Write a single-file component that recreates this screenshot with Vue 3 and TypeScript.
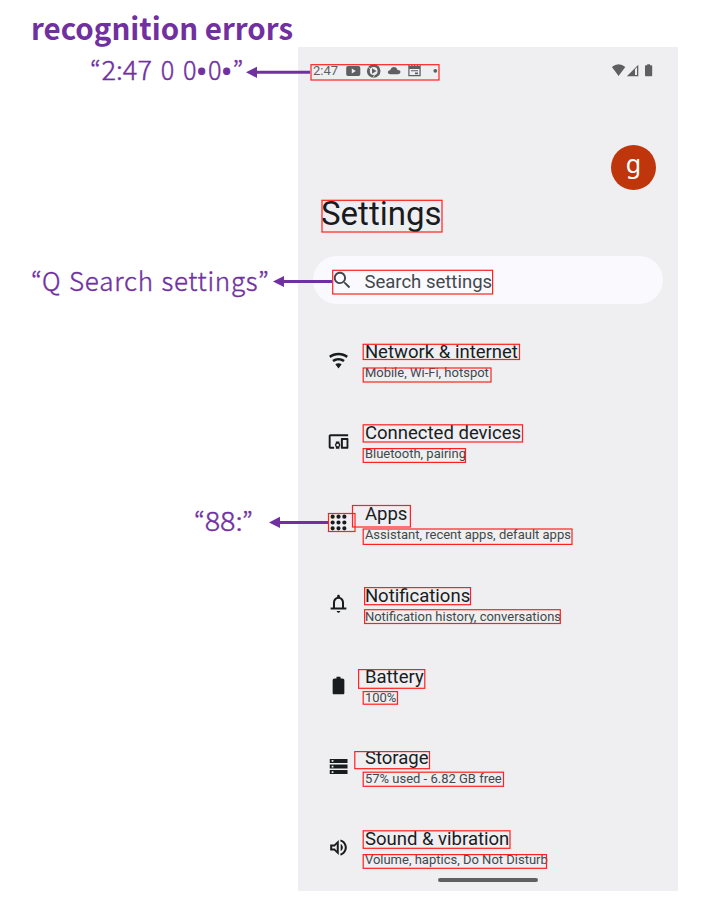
<script setup lang="ts">
interface Row { icon: string; title: string; sub: string }
interface Box { x: number; y: number; r: number; b: number }
interface Part { t: string; x: number; w?: number; dot?: boolean }
interface Note { parts: Part[]; y: number; tip: number; tail: number; line: number }

const rows: Row[] = [
  { icon: 'wifi', title: 'Network & internet', sub: 'Mobile, Wi-Fi, hotspot' },
  { icon: 'devices', title: 'Connected devices', sub: 'Bluetooth, pairing' },
  { icon: 'apps', title: 'Apps', sub: 'Assistant, recent apps, default apps' },
  { icon: 'bell', title: 'Notifications', sub: 'Notification history, conversations' },
  { icon: 'battery', title: 'Battery', sub: '100%' },
  { icon: 'storage', title: 'Storage', sub: '57% used - 6.82 GB free' },
  { icon: 'sound', title: 'Sound & vibration', sub: 'Volume, haptics, Do Not Disturb' },
]

const paths: Record<string, string> = {
  wifi: 'M12 21 15.6 16.2C14.6 15.45 13.35 15 12 15s-2.6.45-3.6 1.2L12 21zM12 3C7.95 3 4.21 4.34 1.2 6.6L3 9c2.5-1.88 5.62-3 9-3s6.5 1.12 9 3l1.8-2.4C19.79 4.34 16.05 3 12 3zm0 6c-2.7 0-5.19.89-7.2 2.4l1.8 2.4C8.1 12.67 9.97 12 12 12s3.9.67 5.4 1.8l1.8-2.4C17.19 9.89 14.7 9 12 9z',
  devices: 'M3 6h20V3.7H3c-1.2 0-2.2.9-2.2 2.1v12.4c0 1.2 1 2.1 2.2 2.1h4V18H3V6zm10 6H9v1.78c-.61.55-1 1.33-1 2.22s.39 1.67 1 2.22V20.3h4v-2.08c.61-.55 1-1.34 1-2.22s-.39-1.67-1-2.22V12zm-2 5.5c-.83 0-1.5-.67-1.5-1.5s.67-1.5 1.5-1.5 1.5.67 1.5 1.5-.67 1.5-1.5 1.5zM22.3 8h-6.6c-.5 0-1 .5-1 1v10.3c0 .5.5 1 1 1h6.6c.5 0 1-.5 1-1V9c0-.5-.5-1-1-1zM21.2 18h-4.2v-7.7h4.2z',
  apps: 'M5.3 2.9a2.4 2.4 0 1 0 0 4.8 2.4 2.4 0 0 0 0-4.8zm6.7 0a2.4 2.4 0 1 0 0 4.8 2.4 2.4 0 0 0 0-4.8zm6.7 0a2.4 2.4 0 1 0 0 4.8 2.4 2.4 0 0 0 0-4.8zM5.3 9.6a2.4 2.4 0 1 0 0 4.8 2.4 2.4 0 0 0 0-4.8zm6.7 0a2.4 2.4 0 1 0 0 4.8 2.4 2.4 0 0 0 0-4.8zm6.7 0a2.4 2.4 0 1 0 0 4.8 2.4 2.4 0 0 0 0-4.8zM5.3 16.3a2.4 2.4 0 1 0 0 4.8 2.4 2.4 0 0 0 0-4.8zm6.7 0a2.4 2.4 0 1 0 0 4.8 2.4 2.4 0 0 0 0-4.8zm6.7 0a2.4 2.4 0 1 0 0 4.8 2.4 2.4 0 0 0 0-4.8z',
  bell: 'M12 22.5c1.1 0 2-.9 2-2h-4c0 1.1.9 2 2 2zm6.3-6v-5.5c0-3.07-1.8-5.64-4.7-6.32V3.6c0-.9-.7-1.6-1.6-1.6s-1.6.7-1.6 1.6v1.08C7.5 5.36 5.7 7.92 5.7 11v5.5H3v2.3h18v-2.3h-2.7zm-2.3 0H8V11c0-2.48 1.51-4.5 4-4.5s4 2.02 4 4.5v5.5z',
  battery: 'M16.4 4H14.3V2H9.7v2H7.6C6.2 4 5.3 4.9 5.3 5.9v14.6c0 1 .6 1.6 1.5 1.6h10.4c.9 0 1.5-.6 1.5-1.6V5.9C18.7 4.9 17.8 4 16.4 4z',
  storage: 'M2 20.6h20.3v-4.6H2v4.6zm2.2-3.3h2v2h-2v-2zM2 3.4V8h20.3V3.4H2zm4.2 3.3h-2v-2h2v2zM2 14.3h20.3V9.7H2v4.6zm2.2-3.3h2v2h-2v-2z',
  sound: 'M2.5 8.7v6.6h4.5l5.3 5.2V3.5L7 8.7H2.5zm7.5-.4v7.4L7.83 13.1H4.8v-2.2h3.03L10 8.3zM17 12c0-1.77-1.02-3.29-2.5-4.03v8.05C15.98 15.29 17 13.77 17 12zM14.2 2.8v2.3c2.89.86 5 3.73 5 6.9s-2.11 6.04-5 6.9v2.3c4.1-.91 7.3-4.68 7.3-9.2S18.3 3.71 14.2 2.8z',
}

const boxes: Box[] = [
  { x: 311, y: 64.7, r: 439, b: 80 },
  { x: 322, y: 200.3, r: 442, b: 232 },
  { x: 332.7, y: 270.3, r: 492.6, b: 294 },
  { x: 363.2, y: 344.3, r: 519.5, b: 359.5 },
  { x: 363.2, y: 368, r: 491, b: 382 },
  { x: 363.2, y: 424.8, r: 522.5, b: 442 },
  { x: 363.2, y: 448.6, r: 465.5, b: 462.4 },
  { x: 328.5, y: 513.5, r: 355, b: 531.5 },
  { x: 352.5, y: 505.5, r: 410.4, b: 527 },
  { x: 363.2, y: 529, r: 572, b: 544.4 },
  { x: 364.6, y: 587.6, r: 470.5, b: 604.7 },
  { x: 364.6, y: 609.7, r: 560.3, b: 623.5 },
  { x: 358.6, y: 669.6, r: 424.8, b: 688.3 },
  { x: 363.2, y: 691.6, r: 397.5, b: 704.2 },
  { x: 354.8, y: 751.6, r: 429.5, b: 768.7 },
  { x: 363.2, y: 772.2, r: 503.5, b: 786.3 },
  { x: 363.2, y: 830.8, r: 510, b: 848.3 },
  { x: 363.2, y: 854.6, r: 546.5, b: 868.3 },
]

const notes: Note[] = [
  {
    parts: [
      { t: '“', x: 90 }, { t: '2:47', x: 101.5, w: 50.5 }, { t: '0', x: 160.7, w: 13.5 }, { t: '0', x: 183, w: 13.5 },
      { t: '•', x: 197.6, dot: true }, { t: '0', x: 208, w: 13.5 }, { t: '•', x: 222.6, dot: true }, { t: '”', x: 232.5 },
    ],
    y: 79.8, tip: 246, tail: 310, line: 72.3,
  },
  {
    parts: [{ t: '“', x: 31 }, { t: 'Q', x: 42, w: 18.5 }, { t: 'Search', x: 69, w: 84 }, { t: 'settings', x: 161.5, w: 96 }, { t: '”', x: 258 }],
    y: 290.7, tip: 273, tail: 332, line: 281.5,
  },
  {
    parts: [{ t: '“', x: 194 }, { t: '88:', x: 204.7, w: 38 }, { t: '”', x: 242 }],
    y: 531.3, tip: 269, tail: 328, line: 522.4,
  },
]

const adjust = (t: string): string => (/^[a-z]{3,}$/i.test(t) ? 'spacing' : 'spacingAndGlyphs')
</script>

<template>
  <main class="page">
    <section class="phone">
      <header class="status">
        <span class="clock">2:47</span>
        <svg class="tray" width="104" height="16" viewBox="0 0 104 16">
          <path fill-rule="evenodd" d="M4 3h10.5q1.8 0 1.8 1.8v6.4q0 1.800-1.800 1.800H4q-1.800 0-1.800-1.800V4.800Q2.200 3 4 3zM7.800 5.600v4.800l4-2.400z" />
          <circle cx="29.7" cy="8" r="6.8" />
          <circle cx="29.7" cy="8" r="3.9" class="hole" />
          <path d="M28 5.2v5.6L32.600 8z" />
          <path class="slit" d="M24 3.500l2.500 3M29 14.500l2.300-3.600" />
          <path d="M46.300 11.300q-2.500 0-2.500-2t2.500-2.200Q47.300 4 50 4q2.700 0 3.500 2.900 3 .1 3 2.200t-2.500 2.200z" />
          <path fill-rule="evenodd" d="M64.300 2h1.400v1h1.500V2h1.400v1h1.300V2h1.400v1h1.500V2h1.400v1h1.500V2h1v11.300H64.300zM65.500 6v6.100h9.900V6z" />
          <path d="M67 7.300h7v1h-7zM71 9.600h3v1.700h-3z" />
          <circle cx="91.300" cy="7.800" r="1.900" />
        </svg>
        <svg class="signals" width="44" height="16" viewBox="0 0 44 16">
          <path d="M1.900 4Q5 1.300 8.600 1.300T15.300 4L8.600 13z" />
          <path fill-rule="evenodd" d="M28.300 1.800v11.500H16.800zM25 6.300v5.800h2V4.300z" />
          <path d="M35.800 2.300h1.400v-1h2.800v1h1.400q.8 0 .8.800v9.400q0 .8-.8.800h-5.600q-.8 0-.8-.8V3.100q0-.8.8-.8z" />
        </svg>
      </header>
      <div class="account"><span class="avatar">g</span></div>
      <h1 class="heading">Settings</h1>
      <div class="search">
        <svg width="22.5" height="22.5" viewBox="0 0 24 24"><path d="M15.500 14h-.79l-.28-.27C15.410 12.590 16 11.110 16 9.500 16 5.910 13.090 3 9.500 3S3 5.910 3 9.500 5.910 16 9.500 16c1.610 0 3.090-.59 4.230-1.570l.27.28v.79l5 4.990L20.490 19l-4.990-5zm-6 0C7.010 14 5 11.990 5 9.500S7.010 5 9.500 5 14 7.010 14 9.500 11.990 14 9.500 14z" /></svg>
        <span>Search settings</span>
      </div>
      <ul class="list">
        <li v-for="row in rows" :key="row.title" class="row">
          <svg class="icon" width="21" height="21" viewBox="0 0 24 24"><path :d="paths[row.icon]" /></svg>
          <div>
            <div class="title">{{ row.title }}</div>
            <div class="sub">{{ row.sub }}</div>
          </div>
        </li>
      </ul>
      <div class="handle"></div>
    </section>

    <svg class="overlay" width="704" height="914" viewBox="0 0 704 914">
      <text class="caption" x="31" y="40" textLength="262">recognition errors</text>
      <g v-for="n in notes" :key="n.y">
        <text
          v-for="(p, i) in n.parts" :key="i" class="note" :class="{ dot: p.dot }"
          :x="p.x" :y="p.dot ? n.y - 0.8 : n.y" :textLength="p.w" :lengthAdjust="adjust(p.t)"
        >{{ p.t }}</text>
        <path class="shaft" :d="`M${n.tip + 9} ${n.line}H${n.tail}`" />
        <path class="head" :d="`M${n.tip} ${n.line}l11-5.600v11.200z`" />
      </g>
      <rect v-for="(b, i) in boxes" :key="i" class="box" :x="b.x" :y="b.y" :width="b.r - b.x" :height="b.b - b.y" />
    </svg>
  </main>
</template>

<style>
body { background: #fff; }
</style>

<style scoped>
.page { position: relative; box-sizing: border-box; width: 704px; height: 914px; padding: 47px 26px 0 298px; overflow: hidden; font-family: Roboto, sans-serif; background: #fff; }
.phone { height: 844px; background: #efeff1; color: #191c1e; }
.status { display: flex; align-items: center; height: 16px; padding: 16px 24px 0 15px; color: #5f5f60; fill: #5f5f60; }
.clock { width: 31px; font-size: 13px; line-height: 16px; }
.signals { margin-left: auto; }
.hole { fill: #efeff1; }
.slit { fill: none; stroke: #efeff1; stroke-width: 0.8; }
.account { display: flex; justify-content: flex-end; padding: 66px 22px 0 0; }
.avatar { width: 45px; height: 45px; border-radius: 50%; background: #bf360c; color: #fff; font-family: "Noto Sans", sans-serif; font-size: 25px; line-height: 37px; text-align: center; }
.heading { margin: 3px 0 0 23px; height: 42px; font-size: 33px; line-height: 42px; font-weight: 400; }
.search { display: flex; align-items: center; gap: 10.5px; box-sizing: border-box; height: 48px; margin: 21px 15px 0; padding-left: 18.4px; border-radius: 24px; background: #faf9fe; color: #41484d; fill: #41484d; font-size: 18.55px; }
.search span { padding-top: 3px; }
.list { margin: 16.4px 0 0; padding: 0; list-style: none; }
.row { display: flex; align-items: center; gap: 15.5px; box-sizing: border-box; height: 81.2px; padding-left: 30.4px; }
.icon { flex: none; fill: #191c1e; margin-top: -1.4px; }
.title { font-size: 18.55px; line-height: 24px; white-space: nowrap; }
.sub { font-size: 13px; line-height: 18px; color: #41484d; white-space: nowrap; }
.handle { position: absolute; left: 438px; top: 878px; width: 100px; height: 4px; border-radius: 2px; background: #606062; }
.overlay { position: absolute; inset: 0; }
.caption { font-family: "Noto Sans CJK JP", sans-serif; font-weight: 700; font-size: 29.5px; fill: #7030a0; }
.note { font-family: "Noto Sans CJK JP", sans-serif; font-weight: 300; font-size: 26px; fill: #7030a0; stroke: #7030a0; stroke-width: 0.4; }
.dot { stroke-width: 1.2; }
.shaft { stroke: #7030a0; stroke-width: 3; }
.head { fill: #7030a0; }
.box { fill: none; stroke: #ff2020; stroke-width: 1.2; }
</style>
